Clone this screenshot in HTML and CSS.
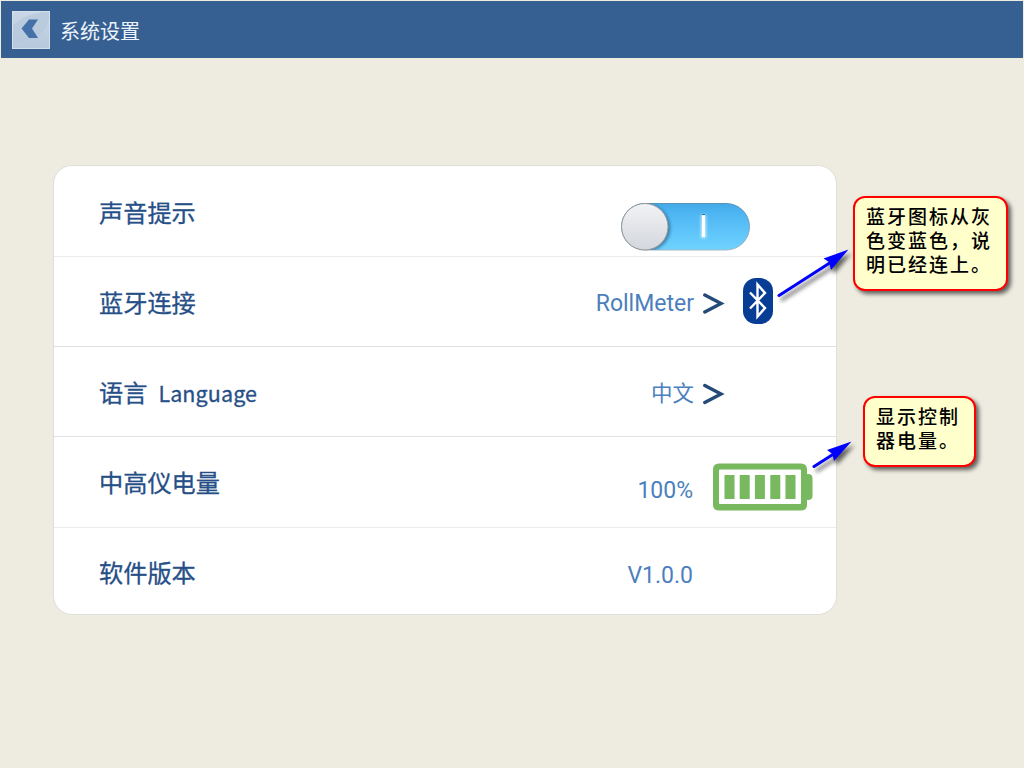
FILE: index.html
```html
<!DOCTYPE html>
<html lang="zh-CN">
<head>
<meta charset="utf-8">
<title>系统设置</title>
<link rel="stylesheet" href="styles.css">
</head>
<body>
<header class="topbar">
  <svg class="back" width="38" height="38" viewBox="0 0 38 38">
    <defs><linearGradient id="bk" x1="0" y1="0" x2="0" y2="1"><stop offset="0" stop-color="#cbd7e6"/><stop offset="1" stop-color="#b7c8dd"/></linearGradient></defs>
    <rect width="38" height="38" fill="url(#bk)"/>
    <path d="M1 14Q12 4 31 1H37V9Q32 29 1 32Z" fill="#b7c8dc" opacity=".75"/>
    <rect x=".5" y=".5" width="37" height="37" fill="none" stroke="#d5dfeb"/>
    <path d="M17 8.500H26L20 17.500L26 27H17L9.500 17.500Z" fill="#4371a8"/>
  </svg>
  <h1 class="title">系统设置</h1>
</header>
<main class="card">
  <section class="row">
    <span class="label">声音提示</span>
    <svg class="switch" width="130" height="50" viewBox="0 0 130 50">
      <defs>
        <linearGradient id="tr" x1="0" y1="0" x2="0" y2="1"><stop offset="0" stop-color="#43a9e8"/><stop offset=".2" stop-color="#4db5f2"/><stop offset="1" stop-color="#6fd3ff"/></linearGradient>
        <linearGradient id="kn" x1="0" y1="0" x2="0" y2="1"><stop offset="0" stop-color="#f2f3f5"/><stop offset="1" stop-color="#d3d6dc"/></linearGradient>
        <linearGradient id="rim" x1="0" y1="0" x2="0" y2="1"><stop offset="0" stop-color="#5b92b6"/><stop offset="1" stop-color="#a5b7c2"/></linearGradient>
        <filter id="gl" x="-2" y="-.5" width="5" height="2"><feGaussianBlur stdDeviation="1.6"/></filter>
        <clipPath id="pill"><rect x=".5" y="1.500" width="128" height="46.500" rx="23.250"/></clipPath>
      </defs>
      <rect x=".5" y="1.500" width="128" height="46.500" rx="23.250" fill="url(#tr)" stroke="url(#rim)"/>
      <g clip-path="url(#pill)"><circle cx="26" cy="26" r="23.500" fill="#24577d" opacity=".6" filter="url(#gl)"/></g>
      <circle cx="23.800" cy="24.750" r="23.250" fill="url(#kn)" stroke="#96989d"/>
      <rect x="80" y="13" width="5" height="23" fill="#fff" opacity=".7" filter="url(#gl)"/>
      <rect x="81" y="13" width="3" height="22" fill="#fff"/><rect x="81" y="12" width="3" height="1" fill="#257bad"/>
    </svg>
  </section>
  <section class="row">
    <span class="label">蓝牙连接</span>
    <span class="value">RollMeter</span>
    <span class="trail">
      <svg class="chevron" width="22" height="24" viewBox="0 0 22 24"><path d="M1.800 3L18 11.500L1.800 20"/></svg>
      <svg class="bluetooth" width="30" height="46" viewBox="0 0 30 46"><rect width="30" height="46" rx="13" fill="#073d94"/><path d="M7 14.500L22 30L14.500 38.500V6.500L22 15L7 30.500" fill="none" stroke="#fff" stroke-width="2.400"/></svg>
    </span>
  </section>
  <section class="row row-dark">
    <span class="label">语言<span class="latin">Language</span></span>
    <span class="value value-cjk">中文</span>
    <span class="trail"><svg class="chevron" width="22" height="24" viewBox="0 0 22 24"><path d="M1.800 3.500L18 12L1.800 20.500"/></svg></span>
  </section>
  <section class="row">
    <span class="label">中高仪电量</span>
    <span class="value value-power">100%</span>
    <span class="trail trail-wide">
      <svg class="battery" width="100" height="48" viewBox="0 0 100 48"><g fill="#78b85f"><path d="M93 11H95Q99.500 11 99.500 15V33Q99.500 37 95 37H93Z"/><path fill-rule="evenodd" d="M6 .5H88Q94 .5 94 6.500V41.500Q94 47.500 88 47.500H6Q0 47.500 0 41.500V6.500Q0 .5 6 .5ZM7 6.500Q6 6.500 6 7.500V40Q6 41 7 41H87Q88 41 88 40V7.500Q88 6.500 87 6.500Z"/><path d="M11.500 12H21.500V36H11.500ZM26.700 12H36.700V36H26.700ZM41.900 12H51.900V36H41.900ZM57.300 12H67.300V36H57.300ZM72.500 12H82.500V36H72.500Z"/></g></svg>
    </span>
  </section>
  <section class="row">
    <span class="label">软件版本</span>
    <span class="value">V1.0.0</span>
    <span class="trail trail-wide"></span>
  </section>
</main>
<svg class="arrows" width="1024" height="768" viewBox="0 0 1024 768">
  <path d="M779 295.500L832 261.500" stroke="#00f" stroke-width="3" stroke-linecap="round"/>
  <path d="M848.500 249.500L823.500 258.500L829 262L831 270Z" fill="#00f"/>
  <path d="M814 466.500L836 452.500" stroke="#00f" stroke-width="3" stroke-linecap="round"/>
  <path d="M851.500 441.500L827 450L832.500 454L834 461Z" fill="#00f"/>
</svg>
<aside class="callout callout-bluetooth">蓝牙图标从灰<br>色变蓝色，说<br>明已经连上。</aside>
<aside class="callout callout-battery">显示控制<br>器电量。</aside>
</body>
</html>
```
FILE: styles.css
```css
* { box-sizing: border-box; }
body {
  margin: 0;
  padding: 1px;
  height: 768px;
  overflow: hidden;
  background: #eeece1;
  font-family: "Noto Sans CJK SC", sans-serif;
}
.topbar {
  height: 57px;
  display: flex;
  align-items: center;
  gap: 10px;
  padding-left: 11px;
  background: #376092;
}
.title {
  margin: 3px 0 0;
  font-size: 20px;
  line-height: 30px;
  font-weight: 400;
  color: #eef4fc;
}
.card {
  width: 784px;
  height: 450px;
  margin: 107px 0 0 52px;
  border: 1px solid #dfdfda;
  border-radius: 19px;
  background: #fff;
}
.row {
  height: 90.300px;
  padding-left: 45px;
  display: flex;
  align-items: center;
  border-bottom: 1px solid #ececee;
}
.row:first-child { height: 91px; }
.row-dark { border-color: #dfe2e6; }
.row:nth-child(2) { border-color: #dfe0e2; height: 90px; }
.row:last-child { border-bottom: 0; height: 86px; }
.label {
  flex: 1;
  font-size: 24.200px;
  line-height: 36px;
  padding-top: 1px;
  color: #274f87;
  -webkit-text-stroke: .3px #274f87;
}
.row:last-child .label { padding-top: 3px; }
.latin {
  margin-left: 11px;
  font-family: "Noto Sans CJK JP", sans-serif;
  font-size: 21.500px;
  letter-spacing: .1px;
}
.switch { margin: 31px 85px 0 0; }
.value {
  font-family: Roboto, "Noto Sans CJK SC", sans-serif;
  font-size: 23px;
  line-height: 30px;
  padding-top: 4px;
  color: #4b7fbd;
}
.value-cjk { font-size: 21.500px; }
.value-power { padding-top: 18px; }
.trail {
  width: 142px;
  display: flex;
  align-items: center;
  padding: 4px 0 0 9px;
}
.trail-wide { width: 143px; }
.row:last-child .value { padding-top: 11px; }
.chevron {
  fill: none;
  stroke: #244a78;
  stroke-width: 3.400;
  stroke-linecap: round;
}
.bluetooth { margin: -6px 0 0 18px; }
.battery { margin: 6px 0 0 11px; }
.arrows {
  position: absolute;
  left: 0;
  top: 0;
  filter: drop-shadow(3px 4px 2px #0009);
}
.callout {
  position: absolute;
  border: 2px solid #f00;
  border-radius: 12px;
  background: #ffffcb;
  box-shadow: 3px 3px 4px #0009;
  padding: 6px 0 0 11px;
  font-size: 19px;
  line-height: 24px;
  letter-spacing: 2px;
  font-weight: 500;
  color: #000;
  white-space: nowrap;
}
.callout-bluetooth { left: 853px; top: 196px; width: 155px; height: 95px; }
.callout-battery { left: 863px; top: 396px; width: 113px; height: 71px; }
```
